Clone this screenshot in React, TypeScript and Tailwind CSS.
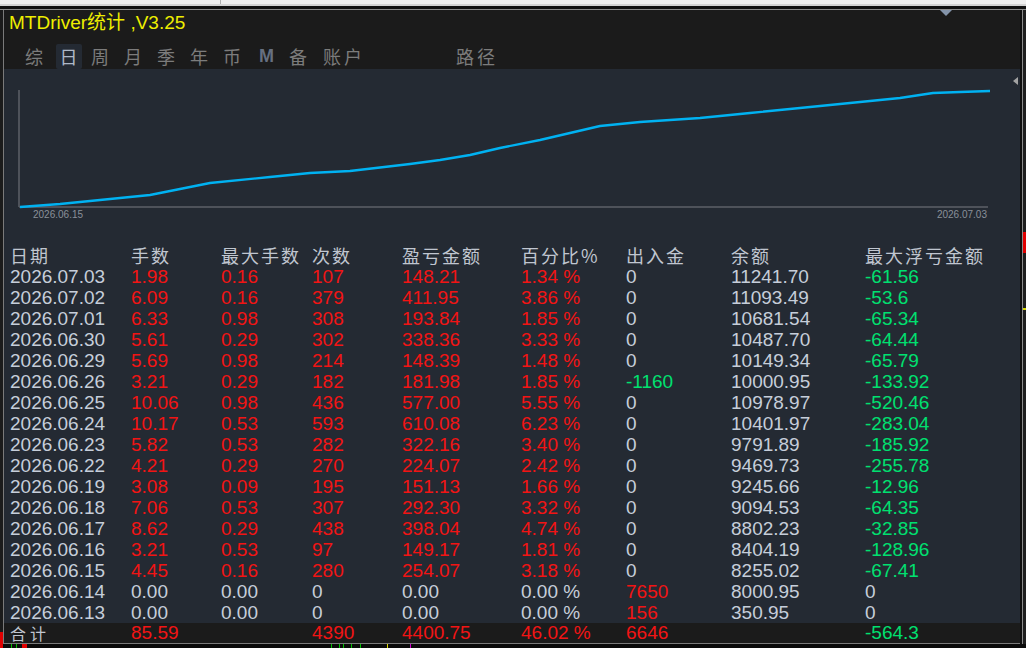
import React from 'react'

type Row = string[]

const ROWS: Row[] = [
  ['2026.07.03', '1.98', '0.16', '107', '148.21', '1.34 %', '0', '11241.70', '-61.56'],
  ['2026.07.02', '6.09', '0.16', '379', '411.95', '3.86 %', '0', '11093.49', '-53.6'],
  ['2026.07.01', '6.33', '0.98', '308', '193.84', '1.85 %', '0', '10681.54', '-65.34'],
  ['2026.06.30', '5.61', '0.29', '302', '338.36', '3.33 %', '0', '10487.70', '-64.44'],
  ['2026.06.29', '5.69', '0.98', '214', '148.39', '1.48 %', '0', '10149.34', '-65.79'],
  ['2026.06.26', '3.21', '0.29', '182', '181.98', '1.85 %', '-1160', '10000.95', '-133.92'],
  ['2026.06.25', '10.06', '0.98', '436', '577.00', '5.55 %', '0', '10978.97', '-520.46'],
  ['2026.06.24', '10.17', '0.53', '593', '610.08', '6.23 %', '0', '10401.97', '-283.04'],
  ['2026.06.23', '5.82', '0.53', '282', '322.16', '3.40 %', '0', '9791.89', '-185.92'],
  ['2026.06.22', '4.21', '0.29', '270', '224.07', '2.42 %', '0', '9469.73', '-255.78'],
  ['2026.06.19', '3.08', '0.09', '195', '151.13', '1.66 %', '0', '9245.66', '-12.96'],
  ['2026.06.18', '7.06', '0.53', '307', '292.30', '3.32 %', '0', '9094.53', '-64.35'],
  ['2026.06.17', '8.62', '0.29', '438', '398.04', '4.74 %', '0', '8802.23', '-32.85'],
  ['2026.06.16', '3.21', '0.53', '97', '149.17', '1.81 %', '0', '8404.19', '-128.96'],
  ['2026.06.15', '4.45', '0.16', '280', '254.07', '3.18 %', '0', '8255.02', '-67.41'],
  ['2026.06.14', '0.00', '0.00', '0', '0.00', '0.00 %', '7650', '8000.95', '0'],
  ['2026.06.13', '0.00', '0.00', '0', '0.00', '0.00 %', '156', '350.95', '0'],
]

const HEADERS = ['日期', '手数', '最大手数', '次数', '盈亏金额', '百分比%', '出入金', '余额', '最大浮亏金额']

const TOTAL = ['合计', '85.59', '', '4390', '4400.75', '46.02 %', '6646', '', '-564.3']

const GRID =
  'grid grid-cols-[121px_90px_91px_90px_119px_105px_105px_134px_1fr] pl-[6px]'

const RED = 'text-[#f21414]'
const GREEN = 'text-[#00e070]'
const GRAY = 'text-[#c6ceda]'

// equity curve, page coordinates minus the chart origin (4, 69)
const CURVE: [number, number][] = [
  [20, 207], [60, 204], [100, 200], [150, 195], [180, 189], [210, 183],
  [270, 177], [310, 173], [350, 171], [410, 164], [440, 160], [470, 155],
  [500, 148], [540, 140], [570, 133], [600, 126], [640, 122], [700, 118],
  [750, 113], [800, 108], [850, 103], [900, 98], [933, 93], [960, 92], [990, 91],
]

function cellColor(row: Row, col: number): string {
  const v = row[col]
  if (col === 0 || col === 7) return GRAY
  if (col === 6 || col === 8) {
    if (v.startsWith('-')) return GREEN
    if (v === '0') return GRAY
    return RED
  }
  return row[1] === '0.00' ? GRAY : RED
}

const TABS: { label: string; w: string; active?: boolean; latin?: boolean }[] = [
  { label: '综', w: 'w-[33px]' },
  { label: '日', w: 'w-[33px]', active: true },
  { label: '周', w: 'w-[33px]' },
  { label: '月', w: 'w-[33px]' },
  { label: '季', w: 'w-[33px]' },
  { label: '年', w: 'w-[33px]' },
  { label: '币', w: 'w-[33px]' },
  { label: 'M', w: 'w-[33px]', latin: true },
  { label: '备', w: 'w-[33px]' },
  { label: '账户', w: 'w-[56px]' },
]

function Chart() {
  const pts = CURVE.map(([x, y]) => `${x - 4},${y - 69}`).join(' ')
  return (
    <svg width="1016" height="176" viewBox="0 0 1016 176" className="block">
      <line x1="15" y1="21" x2="15" y2="138" stroke="#5c6068" strokeWidth="1.5" />
      <line x1="15" y1="138" x2="984" y2="138" stroke="#5c6068" strokeWidth="1.5" />
      <polyline
        points={pts}
        fill="none"
        stroke="#00b2f2"
        strokeWidth="2.4"
        strokeLinejoin="round"
      />
      <text x="29" y="149" fontSize="10" fill="#8a909a" fontFamily="Liberation Sans, sans-serif">
        2026.06.15
      </text>
      <text x="983" y="149" fontSize="10" fill="#8a909a" textAnchor="end" fontFamily="Liberation Sans, sans-serif">
        2026.07.03
      </text>
      <polygon points="1014,8 1009,12 1014,16" fill="#a3a3a3" />
    </svg>
  )
}

export default function App() {
  return (
    <div className="w-[1026px] h-[648px] flex flex-col bg-[#1b1b1b] overflow-hidden font-['Liberation_Sans','Noto_Sans_CJK_SC',sans-serif]">
      {/* window chrome above the panel */}
      <div className="h-[10px] flex flex-col">
        <div className="h-[4px] flex bg-[#efefef]">
          <div className="w-[220px]" />
          <div className="w-px bg-[#b0b0b0]" />
        </div>
        <div className="h-[2px] bg-[#d4d4d4]" />
        <div className="h-[3px] bg-[#111111]" />
        <div className="h-px bg-[#8c8c8c]" />
      </div>

      <div className="h-[634px] flex">
        <div className="w-[3px] flex flex-col bg-[#1b1b1b]">
          <div className="flex-1" />
          <div className="h-[12px] bg-[#e00000]" />
        </div>
        <div className="w-px bg-[#7a7a7a]" />

        <div className="w-[1016px] flex flex-col">
          {/* title + tabs */}
          <div className="relative h-[59px] bg-[#1b1b1b] flex flex-col">
            <div className="pt-[2px] pl-[5px] text-[19px] leading-[22px] text-[#eeee00]">
              MTDriver统计 ,V3.25
            </div>
            <div className="mt-[10px] h-[25px] flex pl-[15px] font-['Noto_Sans_CJK_SC',sans-serif] text-[18px] text-[#7c7c7c]">
              {TABS.map((t) => (
                <div key={t.label} className={`${t.w} flex justify-center`}>
                  <span
                    className={
                      t.active
                        ? 'w-[26px] h-[25px] flex items-center justify-center bg-[#242a33] rounded-[2px] text-[#aeb8c8]'
                        : t.latin
                          ? "h-[25px] flex items-center font-['Liberation_Sans',sans-serif] font-bold text-[#667080]"
                          : 'h-[25px] flex items-center tracking-[3px]'
                    }
                  >
                    {t.label}
                  </span>
                </div>
              ))}
              <div className="w-[74px]" />
              <div className="w-[62px] flex justify-center">
                <span className="h-[25px] flex items-center tracking-[3px]">路径</span>
              </div>
            </div>
            <svg
              width="12"
              height="7"
              viewBox="0 0 12 7"
              className="absolute left-[936px] top-0"
            >
              <polygon points="0,0 12,0 6,6" fill="#8494aa" />
            </svg>
          </div>

          {/* chart + table */}
          <div className="bg-[#242a33] flex flex-col">
            <Chart />
            <div className={`${GRID} h-[21px] text-[18px] leading-[21px] text-[#c0c6d0] font-['Noto_Sans_CJK_SC',sans-serif] tracking-[2px]`}>
              {HEADERS.map((h) => (
                <div key={h} className="whitespace-nowrap">
                  {h}
                </div>
              ))}
            </div>
            {ROWS.map((r) => (
              <div key={r[0]} className={`${GRID} h-[21px] text-[19px] leading-[21px]`}>
                {r.map((v, i) => (
                  <div key={i} className={`whitespace-nowrap ${cellColor(r, i)}`}>
                    {v}
                  </div>
                ))}
              </div>
            ))}
          </div>

          {/* totals */}
          <div className={`${GRID} h-[20px] text-[19px] leading-[20px] bg-[#1b1b1b]`}>
            {TOTAL.map((v, i) => (
              <div
                key={i}
                className={`whitespace-nowrap ${
                  i === 0
                    ? "text-[#c0c6d0] font-['Noto_Sans_CJK_SC',sans-serif] text-[16px] tracking-[4px]"
                    : i === 8
                      ? GREEN
                      : RED
                }`}
              >
                {v}
              </div>
            ))}
          </div>
          <div className="h-px bg-[#7a7a7a]" />
        </div>

        <div className="w-[2px] bg-[#0e0e0e]" />
        <div className="w-px bg-[#8a8a8a]" />
        <div className="w-[3px] flex flex-col bg-[#1e1e1e]">
          <div className="h-[222px]" />
          <div className="h-[21px] bg-[#e00000]" />
          <div className="h-[55px]" />
          <div className="h-[2px] bg-[#d8d800]" />
        </div>
      </div>

      {/* bits of the chart behind the panel */}
      <div className="h-[4px] flex bg-[#0a0a0a]">
        <div className="w-[3px] bg-[#e00000]" />
        <div className="w-[8px]" />
        <div className="w-px bg-[#00c000]" />
        <div className="w-[4px]" />
        <div className="w-px bg-[#00c000]" />
        <div className="w-[5px]" />
        <div className="w-[5px] bg-[#e00000]" />
        <div className="w-[304px]" />
        <div className="w-px bg-[#00c000]" />
        <div className="w-[7px]" />
        <div className="w-px bg-[#00c000]" />
        <div className="w-[3px]" />
        <div className="w-px bg-[#00c000]" />
        <div className="w-[7px]" />
        <div className="w-px bg-[#00c000]" />
        <div className="w-[8px]" />
        <div className="w-px bg-[#00c000]" />
        <div className="w-[26px]" />
        <div className="w-px bg-[#d8d800]" />
        <div className="w-[22px]" />
        <div className="w-px bg-[#d000d0]" />
      </div>
    </div>
  )
}
